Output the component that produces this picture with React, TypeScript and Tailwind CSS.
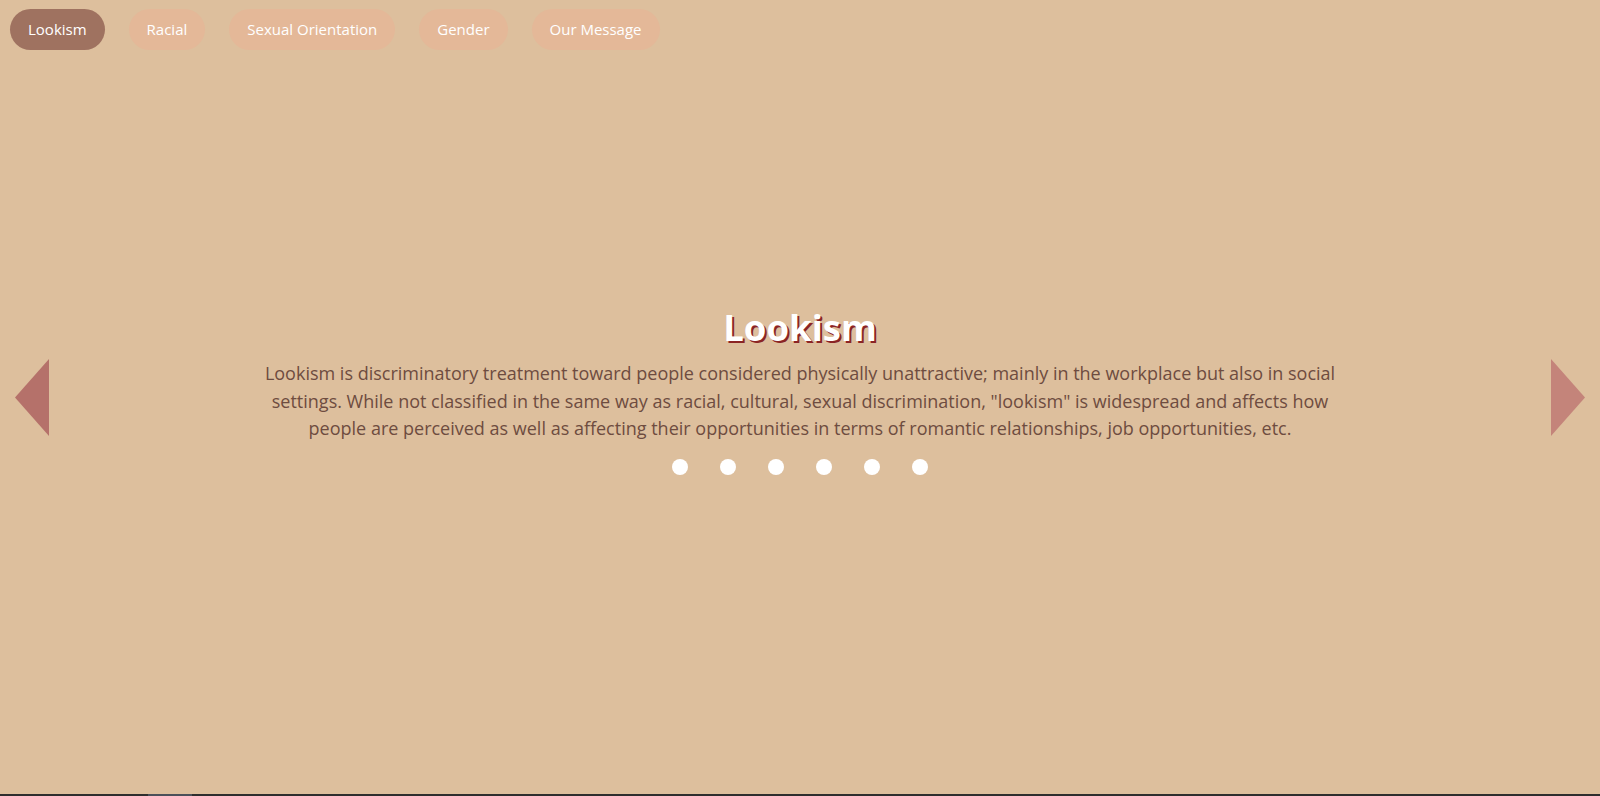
import React from "react";

const tabs = ["Lookism", "Racial", "Sexual Orientation", "Gender", "Our Message"];

function Arrow({ dir }: { dir: "left" | "right" }) {
  return (
    <svg width="34" height="77" viewBox="0 0 34 77" className="shrink-0">
      {dir === "left" ? (
        <polygon points="34,0 34,77 0,38.5" fill="#b5716a" />
      ) : (
        <polygon points="0,0 0,77 34,38.5" fill="#c4847a" />
      )}
    </svg>
  );
}

export default function App() {
  return (
    <div className="w-full h-[796px] bg-[#ddbf9d] flex flex-col font-['Open_Sans',sans-serif] overflow-hidden">
      <div className="relative flex-1">
        {/* nav sits over the slider */}
        <nav className="absolute top-[9px] left-[10px] flex gap-6 z-10">
          {tabs.map((t, i) => (
            <button
              key={t}
              className={`h-[41px] px-[18px] rounded-full text-white text-[15px] ${
                i === 0 ? "bg-[#9f7260]" : "bg-[#e4b898]"
              }`}
            >
              {t}
            </button>
          ))}
        </nav>

        <section className="h-full flex items-center justify-between px-[15px]">
          <Arrow dir="left" />
          <div className="flex flex-col items-center text-center -mt-[14px]">
            <h1 className="text-[36.5px] font-bold text-white leading-[44px] [text-shadow:2px_2px_0_#8b2424]">
              Lookism
            </h1>
            <p className="max-w-[1100px] text-[18px] leading-[27.5px] text-[#6e4c40] mt-[11px]">
              Lookism is discriminatory treatment toward people considered physically unattractive; mainly in the
              workplace but also in social settings. While not classified in the same way as racial, cultural, sexual
              discrimination, "lookism" is widespread and affects how people are perceived as well as affecting their
              opportunities in terms of romantic relationships, job opportunities, etc.
            </p>
            <div className="flex gap-8 mt-[16px]">
              {[0, 1, 2, 3, 4, 5].map((d) => (
                <span key={d} className="w-4 h-4 rounded-full bg-white" />
              ))}
            </div>
          </div>
          <Arrow dir="right" />
        </section>
      </div>
      <div className="h-[2px] bg-[#2e2e2e] flex">
        <div className="ml-[148px] w-[44px] bg-[#4b5059]" />
      </div>
    </div>
  );
}
